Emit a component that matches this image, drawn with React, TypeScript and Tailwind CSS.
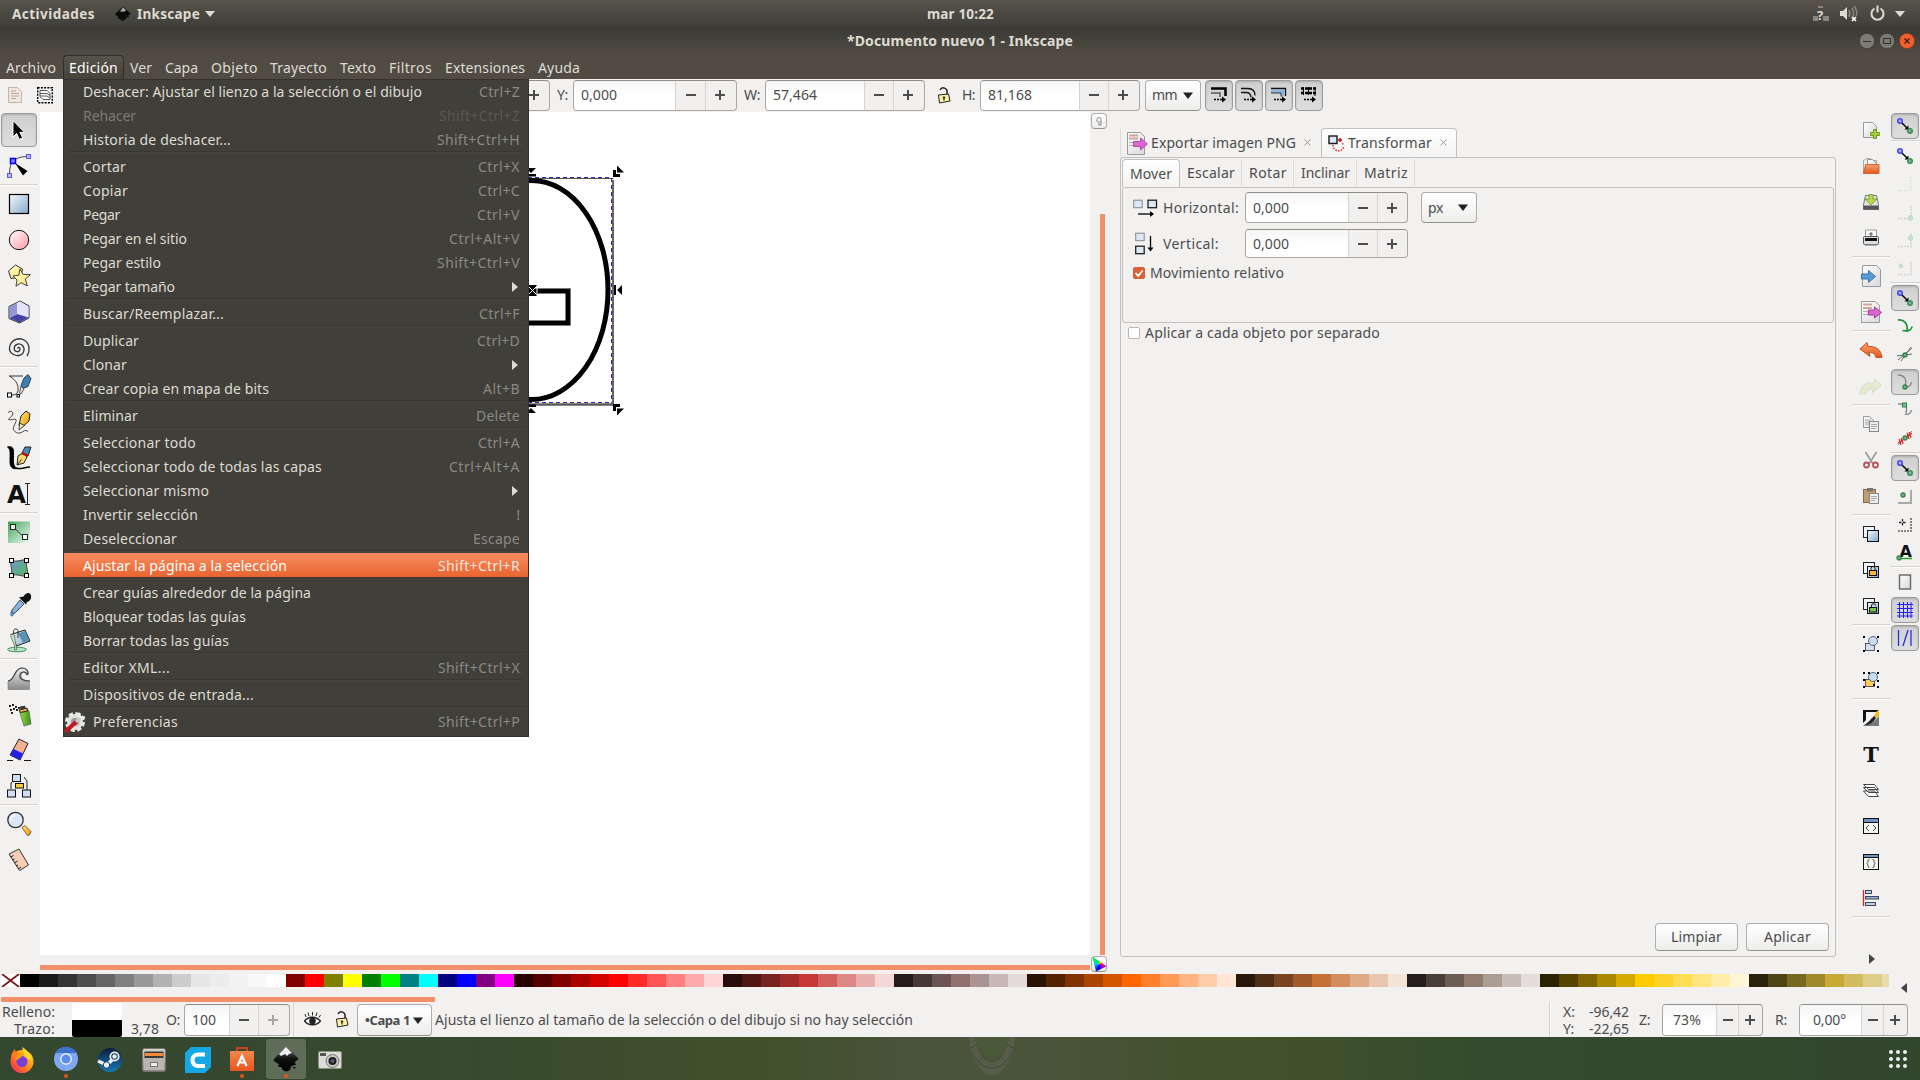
import { useLayoutEffect, useRef, type ReactNode } from "react";

/** Text run spread over a fixed advance width. */
function Fit({ w, children, className = "" }: { w?: number; children: string; className?: string }) {
  const ref = useRef<HTMLSpanElement>(null);
  useLayoutEffect(() => {
    const el = ref.current;
    if (!el || !w) return;
    el.style.letterSpacing = "0px";
    const natural = el.getBoundingClientRect().width;
    el.style.letterSpacing = `${(w - natural) / children.length}px`;
  }, [w, children]);
  return (
    <span ref={ref} className={"inline-block shrink-0 whitespace-pre " + className}>
      {children}
    </span>
  );
}

function Svg({ s = 24, children }: { s?: number; children: ReactNode }) {
  return (
    <svg width={s} height={s} viewBox={`0 0 ${s} ${s}`} fill="none" className="block shrink-0 overflow-visible">
      {children}
    </svg>
  );
}

function Defs() {
  return (
    <svg width="0" height="0" className="absolute">
      <defs>
        <linearGradient id="blue" x1="0" y1="0" x2="1" y2="1"><stop stopColor="#f4f8fc" /><stop offset="1" stopColor="#84a9cd" /></linearGradient>
        <linearGradient id="pink" x1="0" y1="0" x2="1" y2="1"><stop stopColor="#fff" /><stop offset="1" stopColor="#ff98a2" /></linearGradient>
        <linearGradient id="yellow" x1="0" y1="0" x2="1" y2="1"><stop stopColor="#fffce0" /><stop offset="1" stopColor="#ffe65c" /></linearGradient>
        <linearGradient id="green" x1="0" y1="0" x2="1" y2="1"><stop stopColor="#3ea55a" /><stop offset="1" stopColor="#f2fbf4" /></linearGradient>
        <linearGradient id="mesh" x1="0" y1="0" x2="1" y2="1"><stop stopColor="#6f9bd0" /><stop offset="1" stopColor="#58b558" /></linearGradient>
        <linearGradient id="orange" x1="0" y1="0" x2="0" y2="1"><stop stopColor="#f8a36c" /><stop offset="1" stopColor="#e2591f" /></linearGradient>
        <linearGradient id="gold" x1="0" y1="0" x2="1" y2="1"><stop stopColor="#ffe27a" /><stop offset="1" stopColor="#f09a00" /></linearGradient>
        <linearGradient id="paper" x1="0" y1="0" x2="1" y2="1"><stop stopColor="#fff" /><stop offset="1" stopColor="#d8d8d8" /></linearGradient>
        <linearGradient id="wave" x1="0" y1="0" x2="0" y2="1"><stop stopColor="#eee" /><stop offset="1" stopColor="#888" /></linearGradient>
        <linearGradient id="can" x1="0" y1="0" x2="1" y2="0"><stop stopColor="#9ad94a" /><stop offset="1" stopColor="#3f8f16" /></linearGradient>
        <linearGradient id="ink" x1="0" y1="0" x2="0" y2="1"><stop stopColor="#777" /><stop offset=".5" stopColor="#111" /><stop offset="1" stopColor="#000" /></linearGradient>
        <linearGradient id="bag" x1="0" y1="0" x2="0" y2="1"><stop stopColor="#f08a4b" /><stop offset="1" stopColor="#e95420" /></linearGradient>
        <linearGradient id="fox" x1="1" y1="0" x2="0" y2="1"><stop stopColor="#ffe226" /><stop offset=".5" stopColor="#ff8a16" /><stop offset="1" stopColor="#f5156c" /></linearGradient>
        <linearGradient id="steam" x1="0" y1="0" x2="0" y2="1"><stop stopColor="#0a1b3c" /><stop offset="1" stopColor="#1679b5" /></linearGradient>
        <linearGradient id="metal" x1="0" y1="0" x2="0" y2="1"><stop stopColor="#d9d5d0" /><stop offset="1" stopColor="#88847e" /></linearGradient>
      </defs>
    </svg>
  );
}

/* ---------- toolbox ---------- */
const node = (x: number, y: number) => <rect x={x} y={y} width="4" height="4" fill="#fff" stroke="#000" />;
const tools: Record<string, ReactNode> = {
  select: <path d="M6 2.500v16.500l3.600-3.600 2.600 6 3.400-1.700-2.700-5.400h4.600z" fill="#000" stroke="#fff" />,
  node: (<><path d="M2.500 19C2.500 8 8 3 19 2.500" stroke="#444" /><rect x="3.500" y="4.500" width="5" height="5" fill="#8080ff" stroke="#00f" strokeWidth="1.500" /><rect x="19.500" y=".5" width="4" height="4" fill="#b9b9ff" stroke="#5a5af0" /><rect x=".5" y="19.500" width="4" height="4" fill="#b9b9ff" stroke="#5a5af0" /><path d="M8 9l12.500 8-4.500 4.500z" fill="#000" /></>),
  rect: <rect x="2.500" y="2.500" width="19" height="19" fill="url(#blue)" stroke="#000" strokeWidth="1.200" />,
  ellipse: <circle cx="12" cy="12" r="9.700" fill="url(#pink)" stroke="#111" />,
  star: (<><path d="M1.500 7l7-6 7 4-1.500 8-10 1.500z" fill="url(#yellow)" stroke="#333" /><path d="M13 5l3 5.400 7.500.3-5.200 4.300 2 7-6.100-3.300-5.200 3.600 1-6.300-4-4 5.800-.8z" fill="url(#yellow)" stroke="#444" /></>),
  box: (<><path d="M2 6.500L13 1l9 5v12l-9.500 5L2 18.500z" fill="#c9c9ee" stroke="#333" /><path d="M9.500 3L13 1.500l8.500 5v11L9.500 15z" fill="#e3e3fa" /><path d="M2.500 18L10 14l11.500 3.500-9 5z" fill="#4545a5" /><path d="M2.500 7L10 3v11.500L2.500 18z" fill="#9595d8" /></>),
  spiral: <path d="M11.500 12.500c.5-2 3-1 2.500 1.200-.8 3-5.500 2.600-5.800-.9-.3-4.200 4.800-6.500 8-3.500 3.600 3.500 1.500 9.500-3.500 10.200C6.500 20.500 2 15 4 9.500 6 3.500 13 1 18.500 4.200c5.500 3.300 5.700 11 2.500 16" transform="translate(-1 0)" stroke="#333" strokeWidth="1.300" />,
  pen: (<><path d="M2 2h14M2.500 2c8 5 9 10 8.500 15-.5 3-3 4-6 4" stroke="#333" /><rect x=".5" y="19" width="4" height="4" fill="#fff" stroke="#000" /><rect x="10" y="20.500" width="2.500" height="2.500" fill="#fff" stroke="#000" /><path d="M17 4l4-3.500 3 4-3 8-5 2-2-3z" fill="#3d7fb4" stroke="#223" strokeWidth=".8" /><path d="M14 12l3 3-3 5-1.500-1z" fill="#ddd" stroke="#333" strokeWidth=".8" /></>),
  pencil: (<><path d="M1 2.500c3-2.500 6-.5 4.500 2.500C4.500 7 2 8 1.500 9.500c2 1 6.500-1 7.500 0 1.500 2-4.500 8-2 11 3 4 7 2.500 9 1 2-1.600 4-1 5 0" stroke="#444" /><path d="M12 15l2-9 5-5 4 3-1 7-8 7z" fill="url(#gold)" stroke="#222" /><path d="M12 20l.5-7 5 2.500z" fill="#f6e3b6" stroke="#222" strokeWidth=".8" /></>),
  callig: (<><path d="M.5 1c5-1 6 1 6 6 0 8-1 13 3.500 15.500-5 1-7-2-7-7C3 8 4 3 .5 1z" fill="#000" stroke="#000" /><path d="M9 22c5 2 8-1 14-1" stroke="#000" strokeWidth="1.500" /><path d="M10 19l1-9 5-3 4 4-3 6z" fill="#f7d774" stroke="#222" /><path d="M15 7l3-6h6l-3 9z" fill="#4c87c0" stroke="#222" /><path d="M15 7l6 3" stroke="#c00" strokeWidth="2" /><path d="M10.500 18.500l4-5" stroke="#222" /></>),
  text: (<><text x="0" y="21" fontFamily="DejaVu Sans" fontWeight="bold" fontSize="25" textLength="19" lengthAdjust="spacingAndGlyphs" fill="#111">A</text><path d="M18 1.500h5M18 22.500h5M20.500 2v20" stroke="#222" /></>),
  gradient: (<><rect x="1" y="1.500" width="22" height="21.500" fill="url(#green)" /><path d="M6 7l11 10" stroke="#333" /><rect x="3.500" y="4.500" width="5" height="5" stroke="#222" fill="#e6f3e8" /><rect x="15.500" y="14.500" width="5" height="5" stroke="#222" fill="#fff" /></>),
  mesh: (<><path d="M4 4c6 3 10-1 16 0-2 6 2 10 0 16-6 1-10-3-16 0 2-6-1-10 0-16z" fill="url(#mesh)" stroke="#444" />{node(2.5, 2.5)}{node(17.5, 2.5)}{node(2.5, 17.5)}{node(17.5, 17.5)}</>),
  dropper: (<><path d="M13 8l4 4-9 9-3 1-1-1 1-3z" fill="#86b4e0" stroke="#333" strokeWidth=".8" /><path d="M12 5.500l7 7 1-2.500c4-1 5-5 3.500-7.500s-5-1.500-7 2z" fill="#111" /><path d="M5 19c-2 3-1.500 5 0 5s2-2 0-5z" fill="#5f95cf" stroke="#357" strokeWidth=".6" /></>),
  bucket: (<><ellipse cx="10" cy="21.500" rx="9.500" ry="2.300" fill="#b5e8c2" stroke="#274" strokeWidth=".8" /><path d="M4 6.500L18 2l5 11-13.500 5z" fill="url(#blue)" stroke="#222" /><path d="M11 5.500L18 3l4 9.500-6 2.500z" fill="#5a93b5" /><path d="M4 6c-1 4 3 8 3.500 12v4h2c0-6-2-10-2-15z" fill="#b5e8c2" stroke="#444" strokeWidth=".6" /><path d="M7 6C5 1 10-1 11 3v7" stroke="#333" /></>),
  tweak: (<><path d="M1 23.500V15c6 0 6-13 14-13 5 0 7 4 5.500 7-.5-3-3-4-5-2.500-3 3-1 8.500 7 8.500v8.500z" fill="url(#wave)" stroke="#777" strokeWidth=".6" /><path d="M1 15C8 15 7 2 15 2c5 0 7 4 5.500 7M20 9c-1-4-6-4-7 0s3 6 10 6" stroke="#444" strokeWidth="1.200" /></>),
  spray: (<><path d="M13 11c-1-4 6-6 9-2l2 13-7 2z" fill="url(#can)" stroke="#465" strokeWidth=".7" /><path d="M12 8l8-2 .5 3-7 1.500z" fill="#f2b12f" stroke="#222" /><path d="M13 4.500l5-.7.500 3-5 .8z" fill="#333" />{[[2, 3], [5, 2], [8, 4], [3, 7], [6, 6], [9, 7], [4, 10], [11, 5]].map(([x, y]) => <rect key={x + "-" + y} x={x} y={y} width="1.900" height="1.900" fill="#111" />)}</>),
  eraser: (<><path d="M0 22.500h6M17 22.500h7" stroke="#111" strokeWidth="1.200" /><path d="M3 17L12 1l9 4.500L13 22z" fill="#f4b090" stroke="#222" /><path d="M3 17l3.500-6 9.500 4.500L13 22z" fill="#2222e8" /></>),
  connector: (<><path d="M4 15V9l3-3M17 3l3 4v9" stroke="#222" /><rect x="5.500" y=".5" width="8" height="7" fill="#cfe0f4" stroke="#111" /><rect x=".5" y="16" width="8" height="7" fill="#cfe0f4" stroke="#111" /><rect x="15.500" y="16" width="8" height="7" fill="#cfe0f4" stroke="#111" /><rect x="8.500" y="9.500" width="8" height="4.500" fill="#ffcc3a" stroke="#111" /></>),
  zoom: (<><path d="M15 15.500l3-2 6 6-1.500 3.500-2 .5z" fill="url(#gold)" stroke="#543" strokeWidth=".8" /><circle cx="8.500" cy="8" r="7.700" fill="#dbe8f7" stroke="#333" strokeWidth="1.300" /><path d="M3.500 8.500c0-3 2-5 5-5.300" stroke="#fff" strokeWidth="1.500" /></>),
  measure: (<><path d="M2 6L12 1l9.500 16-9 5.500z" fill="#f8cdb6" stroke="#333" /><path d="M3.500 9l3-1.500M5.500 12l2-1M7 15l3.500-2M9 18l2-1M11 21l3-2" stroke="#222" /></>),
};
const toolGroups = [["select", "node"], ["rect", "ellipse", "star", "box", "spiral"], ["pen", "pencil", "callig", "text"], ["gradient", "mesh", "dropper", "bucket"], ["tweak", "spray", "eraser", "connector"], ["zoom", "measure"]];

/* ---------- command bar ---------- */
const page = (x: number, y: number, w: number, h: number) => <path d={`M${x} ${y}h${w - 4}l4 4v${h - 4}h${-w}z`} fill="url(#paper)" stroke="#999" />;
const sheets = (extra: ReactNode) => (<><rect x="4.500" y="4.500" width="11" height="11" fill="#eef4fb" stroke="#222" /><rect x="8.500" y="8.500" width="11" height="11" fill="url(#blue)" stroke="#111" />{extra}</>);
const corners = [[4, 4], [18, 4], [4, 18], [18, 18]].map(([x, y]) => <rect key={`${x}${y}`} x={x} y={y} width="2" height="2" fill="#000" />);
const objects = (fill: string) => (<><rect x="6.500" y="11.500" width="9" height="7" fill={fill} stroke="#334" strokeWidth=".8" /><circle cx="14" cy="9" r="4.500" fill="#c6dcf2" stroke="#445" strokeWidth=".8" /></>);
const commands: Record<string, ReactNode> = {
  new: (<>{page(4.5, 4.5, 13, 15)}<path d="M14.500 11.500h3v3h3v3h-3v3h-3v-3h-3v-3h3z" fill="#a5cf3a" stroke="#5b8a10" strokeWidth=".8" /></>),
  open: (<><path d="M4.500 19.500v-13l3-2h4l1 2h5v5" fill="#eee" stroke="#aaa" />{page(8.5, 5.5, 9, 10)}<path d="M4.500 19.500l2-9h13.500v9z" fill="url(#orange)" stroke="#c9521f" strokeWidth=".8" /></>),
  save: (<><path d="M4.500 14.500l2-9h11l2 9v5h-15z" fill="#e4e4e2" stroke="#777" /><path d="M4.500 15.500h15v4h-15z" fill="#555" /><path d="M10 4.500h4V9h4l-6 6-6-6h4z" fill="#b5d84e" stroke="#6b9a20" strokeWidth=".8" /></>),
  print: (<><path d="M6.500 11v-7h11v7" fill="#fff" stroke="#999" /><path d="M12 6v4M10 8h4" stroke="#555" /><rect x="4.500" y="10.500" width="15" height="8" rx="1" fill="#ddd" stroke="#555" /><path d="M6 12h12v3H6z" fill="#111" /><path d="M6 18.500h12v1.500H6z" fill="#aaa" /></>),
  import: (<>{page(3.5, 1.5, 18, 21)}<path d="M2.500 10h7V6.500l7 6-7 6V15h-7z" fill="#5b9bd5" stroke="#3973ac" /></>),
  export: (<>{page(2.5, 1.5, 18, 21)}<path d="M4 4.500h9M4 8h9" stroke="#d0a49a" strokeWidth="2" /><path d="M4 11.500h6M4 14.500h6" stroke="#aaa" /><path d="M9.500 10h6V7l7 5.500-7 5.500v-3h-6z" fill="#dd66cf" stroke="#a03c98" /></>),
  undo: <path d="M1 11l7-6.500 1 4c8-.5 13 3 14 11h-6c-1-4-3-5-7-5l1 4z" fill="url(#orange)" stroke="#c2501c" />,
  redo: <path d="M22.500 11.500l-7-6.500-1 4C6.500 8.500 1.500 12 1 20h6c1-4 3-5 7-5l-1 4z" fill="#e4ead2" stroke="#d7dfc0" />,
  copy: (<>{page(4.5, 4.5, 10, 11)}<path d="M6 8h6M6 10h4M6 12h4" stroke="#aaa" /><rect x="10.500" y="9.500" width="9" height="10" fill="#eee" stroke="#888" /><path d="M12 12.500h6M12 14.500h6M12 16.500h5" stroke="#aaa" /></>),
  cut: (<><path d="M6.500 4l7.500 12M17.500 4L10 16" stroke="#999" strokeWidth="1.600" /><circle cx="7.500" cy="17" r="2.500" stroke="#b8505a" strokeWidth="1.800" /><circle cx="16.500" cy="17" r="2.500" stroke="#b8505a" strokeWidth="1.800" /></>),
  paste: (<><rect x="4.500" y="5.500" width="12" height="13" fill="#c29d72" stroke="#8a6a44" /><rect x="8" y="4" width="6" height="3.500" fill="#777" /><rect x="10.500" y="9.500" width="9" height="10" fill="#eee" stroke="#888" /><path d="M12 12.500h6M12 14.500h6M12 16.500h4" stroke="#aaa" /></>),
  dup: sheets(null),
  clone: sheets(<><rect x="10.500" y="12.500" width="7" height="5" fill="#ffb629" stroke="#111" /><path d="M12 12v-1.500a2 2 0 014 0V12" stroke="#111" /></>),
  unlink: sheets(<><rect x="10.500" y="13.500" width="7" height="4.500" fill="#7cc242" stroke="#111" /><path d="M12.500 13v-1a2 2 0 014-.5" stroke="#111" /></>),
  group: <>{objects("#cfe0f4")}{corners}</>,
  ungroup: (<>{objects("#ffcc55")}{corners}<path d="M9 4h2v2H9zM18 12h2v2h-2zM4 11h2v2H4zM14 16h2v2h-2z" fill="#000" /></>),
  fill: (<><path d="M4.500 4.500h15L4.500 19.500z" fill="#f4f4f4" /><path d="M4 4h16v2H7v8l-3 3z" fill="#111" /><path d="M20 10v10H6c6-2 10-5 14-10z" fill="#777" /><path d="M20 4v7l-3 1-2-2 3-5z" fill="#f5b62c" /><path d="M15 10l2 2c-2 4-6 7-13 8 5-3 7-6 11-10z" fill="#222" /></>),
  font: <text x="12" y="20" textAnchor="middle" fontFamily="DejaVu Serif" fontWeight="bold" fontSize="21" fill="#111">T</text>,
  layers: <path d="M4.500 13h11l4 5.500h-10zM4.500 9.500h11l4 5h-10zM4.500 6.500h11l4 5h-10z" fill="#fff" stroke="#444" />,
  xml: (<><rect x="4.500" y="4.500" width="15" height="15" fill="#f4f4ee" stroke="#111" /><path d="M5 5h14v3H5z" fill="#6c93c4" /><path d="M5 8.500h14" stroke="#111" /><path d="M10 11l-3 3 3 3M14 11l3 3-3 3" stroke="#444" /></>),
  css: (<><rect x="4.500" y="4.500" width="15" height="15" fill="#f4f4ee" stroke="#111" /><path d="M5 5h14v2H5z" fill="#6c93c4" /><path d="M5 7.500h14" stroke="#111" /><path d="M10.500 9.500c-2.500 0-1 3.500-2.500 4 1.500.5 0 4 2.500 4M13.500 9.500c2.500 0 1 3.500 2.500 4-1.500.5 0 4-2.500 4" stroke="#444" /></>),
  align: (<><path d="M4.500 4v16" stroke="#d22" strokeWidth="1.300" /><rect x="6.500" y="4.500" width="6" height="3" fill="#bcd3ec" stroke="#445" /><rect x="6.500" y="10.500" width="13" height="2.500" fill="#8fb2d8" stroke="#445" /><rect x="6.500" y="16.500" width="10" height="3" fill="#bcd3ec" stroke="#445" /></>),
};
const commandGroups = [["new", "open", "save", "print"], ["import", "export"], ["undo", "redo"], ["copy", "cut", "paste"], ["dup", "clone", "unlink"], ["group", "ungroup"], ["fill", "font", "layers", "xml", "css", "align"]];

/* ---------- snap bar ---------- */
const gdot = (x: number, y: number) => <circle cx={x} cy={y} r="2" fill="#7fa0b8" stroke="#2c8a35" strokeWidth="1.300" />;
const snapMain = (<><circle cx="3" cy="3" r="2.200" fill="#aab4ff" stroke="#4545f0" strokeWidth="1.600" /><path d="M5 5l5.500 5.500" stroke="#000" strokeWidth="1.400" /><path d="M11.500 7.500v4h-4z" fill="#000" /><circle cx="13" cy="13" r="2.200" fill="#8ab" stroke="#3a9345" strokeWidth="1.600" /></>);
const dashCorner = <path d="M1 14.500h13V1" stroke="#d2d2d2" strokeWidth="1.600" strokeDasharray="2 1" />;
const snaps: Record<string, ReactNode> = {
  main: snapMain,
  bbox: <path d="M1 14.500h12.500V1" stroke="#d5e8d5" strokeWidth="1.600" strokeDasharray="2 1" />,
  bcorner: <>{dashCorner}<circle cx="13.500" cy="14" r="2" fill="#cdd8e0" stroke="#c3ddc5" strokeWidth="1.300" /></>,
  bmid: <>{dashCorner}<circle cx="13.500" cy="6" r="2" fill="#cdd8e0" stroke="#c3ddc5" strokeWidth="1.300" /></>,
  bcenter: <>{dashCorner}<circle cx="4" cy="6" r="1.800" fill="#d5dddd" stroke="#c3ddc5" strokeWidth="1.300" /></>,
  path: <path d="M1 2c6-1 10 4 9 10M5.500 12.500c5 1 9 0 9.500-4" stroke="#189030" strokeWidth="1.600" />,
  inter: <><path d="M1 14L15 2M4 15L14 1M0 10l15-2" stroke="#666" />{gdot(8, 9)}</>,
  cusp: <><path d="M1 1c7 0 9 5 7 11M7 13c5 1 7-2 7.500-5" stroke="#888" strokeWidth="1.400" />{gdot(8, 13)}</>,
  smooth: <><path d="M1 2h5c4 0 4 5 3 9M8 12c4 1 6-1 6.500-4" stroke="#888" strokeWidth="1.400" /><rect x="5.500" y="1" width="4" height="4" fill="#8ab" stroke="#2c8a35" /></>,
  line: <><path d="M1 15L15 1" stroke="#888" /><path d="M2 9l2 6M4 8l2 6M1 13l5-3M10 3l2 6M12 2l2 6M10 7l5-4" stroke="#d22" strokeWidth="1.200" />{gdot(8, 8)}</>,
  center: <><path d="M1 15h13V2" stroke="#aaa" strokeWidth="2" />{gdot(6, 7)}</>,
  rot: <><path d="M1 15h13V2" stroke="#666" strokeWidth="1.600" strokeDasharray="2 1" /><path d="M5.500 3v7M2 6.500h7" stroke="#222" strokeWidth="1.300" strokeDasharray="2.500 1.500" /></>,
  textb: <><path d="M1 14.500h14" stroke="#2ca02c" strokeWidth="1.500" /><text x="2.500" y="13" fontFamily="DejaVu Sans" fontWeight="bold" fontSize="16" fill="#111">A</text>{gdot(2, 14)}</>,
  pageb: <rect x="2.500" y="1" width="11" height="14" fill="url(#paper)" stroke="#666" strokeWidth="1.400" />,
  grid: <path d="M2.500 0v16M6.500 0v16M10.500 0v16M14 0v16M0 2.500h16M0 6.500h16M0 10.500h16M0 14h16" stroke="#2020f0" />,
  guide: <path d="M1.500 0v16M14 0v16M6 16L11 0" stroke="#2020f0" strokeWidth="1.200" />,
};
const snapGroups = [["*main"], ["main", "bbox", "bcorner", "bmid", "bcenter"], ["*main", "path", "inter", "*cusp", "smooth", "line"], ["*main", "center", "rot", "textb"], ["pageb", "*grid", "*guide"]];

const PRESSED = "rounded-[4px] border border-[#9d9b99] bg-gradient-to-b from-[#cfcfcf] to-[#dedede] shadow-[inset_0_1px_2px_rgba(0,0,0,.18)]";
const RAISED = "rounded-[4px] border border-[#b0aeac] border-b-[#98928a] bg-gradient-to-b from-white to-[#ededec]";

/* ---------- menu ---------- */
type Item = [label: string, w: number, keys?: string, kw?: number];
const menu: Item[][] = [
  [["Deshacer: Ajustar el lienzo a la selección o el dibujo", 339, "Ctrl+Z", 41], ["Rehacer", 53, "Shift+Ctrl+Z", 81], ["Historia de deshacer...", 148, "Shift+Ctrl+H", 83]],
  [["Cortar", 43, "Ctrl+X", 42], ["Copiar", 45, "Ctrl+C", 42], ["Pegar", 37, "Ctrl+V", 43], ["Pegar en el sitio", 104, "Ctrl+Alt+V", 71], ["Pegar estilo", 78, "Shift+Ctrl+V", 83], ["Pegar tamaño", 92, ">"]],
  [["Buscar/Reemplazar...", 141, "Ctrl+F", 41]],
  [["Duplicar", 56, "Ctrl+D", 43], ["Clonar", 44, ">"], ["Crear copia en mapa de bits", 186, "Alt+B", 37]],
  [["Eliminar", 55, "Delete", 44]],
  [["Seleccionar todo", 113, "Ctrl+A", 42], ["Seleccionar todo de todas las capas", 239, "Ctrl+Alt+A", 71], ["Seleccionar mismo", 126, ">"], ["Invertir selección", 115, "!"], ["Deseleccionar", 94, "Escape", 47]],
  [["Ajustar la página a la selección", 204, "Shift+Ctrl+R", 82]],
  [["Crear guías alrededor de la página", 228], ["Bloquear todas las guías", 163], ["Borrar todas las guías", 146]],
  [["Editor XML...", 87, "Shift+Ctrl+X", 82]],
  [["Dispositivos de entrada...", 171]],
  [["Preferencias", 85, "Shift+Ctrl+P", 82]],
];

function EditMenu() {
  return (
    <div className="absolute left-[63px] top-[79px] z-20 flex h-[658px] w-[466px] flex-col border-x border-b border-[#33322e] bg-[#403f3a] text-[#dfdbd2] shadow-[inset_0_1px_0_#33322e]">
      {menu.map((group, gi) => (
        <div key={gi} className="flex flex-col">
          {gi > 0 && <div className="mx-1 h-[3px] border-t border-[#383733] bg-[#46453f]/50" />}
          {group.map(([label, w, keys, kw]) => {
            const hot = label.startsWith("Ajustar");
            const off = label === "Rehacer";
            const prefs = label === "Preferencias";
            return (
              <div
                key={label}
                className={
                  "flex items-center justify-between pr-[8px] " +
                  (prefs ? "h-[26px] " : "h-6 pl-[19px] pt-[2px] ") +
                  (hot ? "bg-gradient-to-b from-[#f88c5e] to-[#e8642f] text-white" : off ? "text-[#7e7b75]" : "")
                }
              >
                <span className="flex items-center">
                  {prefs && (
                    <span className="mr-[7px]">
                      <Svg s={22}>
                        <circle cx="11" cy="11" r="8" fill="#ddd" stroke="#e8e8e8" strokeWidth="4" strokeDasharray="4 2.300" />
                        <circle cx="11" cy="11" r="4" fill="#999" />
                        <path d="M2.500 19.500l9-8" stroke="#c4161c" strokeWidth="4" strokeLinecap="round" />
                        <path d="M12 11l5-5" stroke="#ccc" strokeWidth="3" />
                        <path d="M16 2c-2 3 1 6 5 4" stroke="#eee" strokeWidth="2.500" />
                      </Svg>
                    </span>
                  )}
                  <Fit w={w}>{label}</Fit>
                </span>
                {keys === ">" ? (
                  <span className="mr-[2px]"><svg width="6" height="10" className="block"><path d="M0 0l6 5-6 5z" fill="#dfdbd2" /></svg></span>
                ) : keys ? (
                  <Fit w={kw} className={hot ? "text-[#f8e6de]" : off ? "text-[#5a5852]" : "text-[#8c8983]"}>{keys}</Fit>
                ) : null}
              </div>
            );
          })}
        </div>
      ))}
    </div>
  );
}

/* ---------- form controls ---------- */
function Spin({ box, field, btn, value, vw, dim }: { box: string; field: string; btn: string; value: string; vw: number; dim?: boolean }) {
  return (
    <div className={"flex shrink-0 overflow-hidden rounded-[4px] border border-[#a9a7a4] border-t-[#8f8d8a] bg-[#f1f0ef] " + box}>
      <div className={"flex items-center bg-gradient-to-b from-[#f4f4f4] via-white to-white " + field}><Fit w={vw}>{value}</Fit></div>
      <div className={"flex items-center justify-center border-l border-[#d6d4d2] " + btn}>
        <span className="h-[2px] w-[10px] bg-[#4c4c4c]" />
      </div>
      <div className="flex flex-1 items-center justify-center border-l border-[#d6d4d2] pr-[2px]">
        <svg width="10" height="10"><path d="M5 0v10M0 5h10" stroke={dim ? "#a9a6a2" : "#4c4c4c"} strokeWidth="2" /></svg>
      </div>
    </div>
  );
}
const Down = () => <svg width="10" height="7" className="block shrink-0"><path d="M0 .5h10L5 7z" fill="#222" /></svg>;
const Lock = () => (
  <svg width="14" height="17" viewBox="0 0 14 17" fill="none"><path d="M3 3C5-1 11 1 10 6v2" stroke="#222" strokeWidth="1.500" /><path d="M1.500 8l10-1 1.500 7-10.500 2z" fill="#fff3a0" stroke="#222" /><path d="M7 9.500v4M5.800 10.500h2.400" stroke="#222" strokeWidth="1.300" /></svg>
);

const menubar: [string, number, string][] = [["Ver", 22, "w-[35px]"], ["Capa", 33, "w-[46px]"], ["Objeto", 47, "w-[59px]"], ["Trayecto", 57, "w-[70px]"], ["Texto", 36, "w-[49px]"], ["Filtros", 43, "w-[56px]"], ["Extensiones", 80, "w-[93px]"], ["Ayuda", 42, "w-[42px]"]];

function Header() {
  return (
    <>
      <div className="flex h-[27px] items-center bg-gradient-to-b from-[#58544b] to-[#3f3e39] px-3 font-bold text-[#dfdbd2]">
        <div className="flex w-[936px] items-center">
          <Fit w={83} className="text-[13.500px]">Actividades</Fit>
          <span className="ml-[20px] mr-[6px]">
            <svg width="16" height="16" viewBox="0 0 24 24"><path d="M12 1l11 10c1 2-4 3-3 4s2 2-1 2-2 3-5 4-2 2-4 1-1-3-4-3 0-2-3-4-3-2-2-4z" fill="#0c0c0c" /><path d="M12 2l5 5-3 1-2 1-2-1-3 1z" fill="#aaa" /></svg>
          </span>
          <Fit w={63} className="text-[13.500px]">Inkscape</Fit>
          <svg width="10" height="6" className="ml-[5px]"><path d="M0 0h10L5 6z" fill="#dfdbd2" /></svg>
        </div>
        <div className="flex flex-1 justify-start"><div className="-ml-[21px]"><Fit w={67} className="text-[13.500px]">mar 10:22</Fit></div></div>
        <div className="flex items-center">
          <Svg s={17}><path d="M6 1h5v2H6zM1 11h5v5H1zM11 11h6v5h-6z" fill="#8b8780" /><text x="5" y="15" fontFamily="Noto Sans" fontWeight="bold" fontSize="13" fill="#dfdbd2">?</text></Svg>
          <span className="ml-[11px]"><Svg s={17}><path d="M0 6h3l4-4v13l-4-4H0z" fill="#dfdbd2" /><path d="M9 5c1 2 1 5 0 7M12 3c2 3 2 8 0 11M14 1c3 4 3 8 2 10" stroke="#8b8780" strokeWidth="1.500" /><path d="M12 12l4 4M16 12l-4 4" stroke="#fff" strokeWidth="1.700" /></Svg></span>
          <span className="ml-[13px]"><Svg s={15}><path d="M4.500 2.500a6 6 0 106 0M7.500-.5v7" stroke="#dfdbd2" strokeWidth="2" /></Svg></span>
          <svg width="10" height="6" className="ml-[10px] mr-[3px]"><path d="M0 0h10L5 6z" fill="#dfdbd2" /></svg>
        </div>
      </div>
      <div className="flex h-[27px] items-center bg-gradient-to-b from-[#3a3935] to-[#504c44] pr-[5px] text-[#dfdbd2]">
        <div className="flex flex-1 pl-[847px]"><Fit w={226} className="text-[14px] font-bold">*Documento nuevo 1 - Inkscape</Fit></div>
        <div className="flex items-center gap-[4px]">
          <Svg s={16}><circle cx="8" cy="8" r="7.700" fill="#7d7a73" stroke="#33322e" strokeWidth=".7" /><path d="M4 8.500h8" stroke="#33322e" /></Svg>
          <Svg s={16}><circle cx="8" cy="8" r="7.700" fill="#7d7a73" stroke="#33322e" strokeWidth=".7" /><rect x="4.500" y="5.500" width="7" height="5" stroke="#33322e" /></Svg>
          <Svg s={16}><circle cx="8" cy="8" r="7.700" fill="#ee5f2d" stroke="#7b2d12" strokeWidth=".7" /><path d="M5.500 5.500l5 5M10.500 5.500l-5 5" stroke="#4a1c0c" strokeWidth="1.400" /></Svg>
        </div>
      </div>
      <div className="flex h-[25px] items-center bg-[#504c44] pl-[6px] text-[#dfdbd2]">
        <span className="w-[57px] pt-[2px]"><Fit w={50}>Archivo</Fit></span>
        <span className="mr-[6px] mt-[1px] flex h-6 w-[61px] items-center rounded-t-[4px] border border-b-0 border-[#2f2e2a] bg-gradient-to-b from-[#57534a] to-[#454339] pl-[5px] pt-[1px] text-white"><Fit w={49}>Edición</Fit></span>
        {menubar.map(([t, w, cls]) => <span key={t} className={"pt-[2px] " + cls}><Fit w={w}>{t}</Fit></span>)}
      </div>
    </>
  );
}

const arrow = <><path d="M3 12.500h9" stroke="#000" strokeWidth="1.500" strokeDasharray="2 1" /><path d="M11 9.500l4 3-4 3z" fill="#000" /></>;
const affect: ReactNode[] = [
  <><path d="M0 1.500h14.500V9" stroke="#000" strokeWidth="2.500" /><path d="M0 6h9v4" stroke="#555" strokeWidth="1.500" />{arrow}</>,
  <><path d="M0 1.500h7c5 0 7 3 7 7" stroke="#111" strokeWidth="1.300" /><path d="M0 5.500h5c4 0 5 2 5 5" stroke="#111" strokeWidth="1.300" />{arrow}</>,
  <><path d="M0 1.500h14.500V9" stroke="#111" strokeWidth="1.300" /><path d="M0 2.500h13.500v7h-3.500V6H0z" fill="#8fb4dc" /><path d="M0 6h10v3.500" stroke="#333" />{arrow}</>,
  <><path d="M0 1.500h16M0 6h16" stroke="#000" strokeWidth="2.500" strokeDasharray="3 1" /><path d="M2.500 0v8M7.500 0v8M14 0v9" stroke="#000" />{arrow}</>,
];

function ControlBar() {
  return (
    <div className="flex h-[33px] items-center border-b border-[#f2f1f0] bg-[#f2f1f0] pl-[6px]">
      <Svg s={18}><path d="M2.500 1.500h9l4 4v11h-13z" fill="#eee6e0" stroke="#c0b4ac" /><path d="M5 5h5M5 7.500h8M5 10h8M5 12.500h5" stroke="#c9a79a" strokeWidth="1.200" /></Svg>
      <span className="ml-[13px] w-[412px]"><Svg s={16}><rect x=".7" y=".7" width="14.600" height="15" stroke="#000" strokeWidth="1.400" strokeDasharray="2 1.200" /><path d="M3 3.500h7l3 3v6H6l-3-3zM3 6.500h7l3 2M3 9h7l3 2" fill="#fff" stroke="#444" strokeWidth=".9" /></Svg></span>
      <Spin box="h-[31px] w-[101px]" field="w-[42px]" btn="w-[28px]" value=" " vw={4} />
      <Fit w={11} className="ml-[7px] mr-[5px]">Y:</Fit>
      <Spin box="h-[31px] w-[164px]" field="w-[101px] pl-[7px]" btn="w-[30px]" value="0,000" vw={36} />
      <Fit w={16} className="ml-[7px] mr-[5px]">W:</Fit>
      <Spin box="h-[31px] w-[160px]" field="w-[98px] pl-[7px]" btn="w-[29px]" value="57,464" vw={44} />
      <span className="ml-[12px] mr-[11px]"><Lock /></span>
      <Fit w={13} className="mr-[5px]">H:</Fit>
      <Spin box="h-[31px] w-[160px]" field="w-[98px] pl-[7px]" btn="w-[29px]" value="81,168" vw={44} />
      <div className={"ml-[5px] flex h-[31px] w-[56px] items-center justify-between pl-[6px] pr-[7px] " + RAISED}><Fit w={25}>mm</Fit><Down /></div>
      <div className="ml-[4px] flex gap-[2px]">
        {affect.map((a, i) => <div key={i} className={"flex h-[31px] w-[28px] items-start justify-center pt-[6px] " + PRESSED}><Svg s={16}>{a}</Svg></div>)}
      </div>
    </div>
  );
}

function Drawing() {
  return (
    <svg width="1050" height="843" viewBox="40 112 1050 843" fill="none" className="block">
      <path d="M500 178.500h113.500" stroke="#555" />
      <path d="M613 180v226" stroke="#666" strokeWidth="2" />
      <path d="M500 404.500h114" stroke="#5c5c5c" strokeWidth="2.500" />
      <path d="M500 177.500h112M611.500 178v225M500 402.500h112" stroke="#2a2ab0" strokeDasharray="4 3" />
      <ellipse cx="531.500" cy="290" rx="76.500" ry="109.500" stroke="#000" strokeWidth="5" />
      <rect x="490" y="291" width="78" height="32" stroke="#000" strokeWidth="5" />
      <path d="M500 289v-.5h70.500V325.500H500" stroke="#777" strokeWidth=".7" />
      <g fill="#000">
        <path d="M526 168h10l-5 5zM526 174h10v2.500h-10z" />
        <path d="M526 407h10v-2.500h-10zM526 413h10l-5-5z" />
        <path d="M617 165.500l7 7h-7zM613 170h3v4h4v3h-7z" />
        <path d="M617 415.500l7-7h-7zM613 411h3v-4h4v-3h-7z" />
        <path d="M622 285v10l-5-5zM614 285h2v10h-2z" />
      </g>
      <path d="M526 285h11l-4 5.500 4 5.500h-11z" fill="#000" />
      <path d="M529 287l7 7M536 287l-7 7M537 288v5" stroke="#fff" />
    </svg>
  );
}

const Rule = ({ cls }: { cls: string }) => <div className={"h-[2px] border-t border-[#d4d2d0] bg-[#fafafa] " + cls} />;

function IconColumn({ groups, icons, tools: isTools }: { groups: string[][]; icons: Record<string, ReactNode>; tools?: boolean }) {
  return (
    <>
      {groups.map((g, gi) => (
        <div key={gi}>
          {(gi > 0) && <Rule cls="w-[38px]" />}
          {g.map((k) => (
            <div key={k} className="flex h-9 w-[38px] items-center justify-center">
              {k === "select" ? (
                <div className={"flex h-[34px] w-[36px] items-center justify-center " + PRESSED}><Svg>{icons[k]}</Svg></div>
              ) : <Svg>{icons[k]}</Svg>}
            </div>
          ))}
        </div>
      ))}
      {!isTools && <Rule cls="w-[38px]" />}
    </>
  );
}

const innerTabs: [string, number, string][] = [["Escalar", 48, "w-[62px]"], ["Rotar", 38, "w-[52px]"], ["Inclinar", 49, "w-[63px]"], ["Matriz", 44, "w-[58px]"]];

function Dock() {
  return (
    <div className="flex h-[845px] w-[716px] flex-col pt-[16px]">
      <div className="flex h-[29px] items-end">
        <div className="flex h-[29px] w-[201px] items-center border-l border-[#dedcda] pl-[6px]">
          <Svg s={24}><g transform="translate(-1 1)"><path d="M1.500.5h13l4 4v18h-17z" fill="url(#paper)" stroke="#999" /><path d="M3 3.500h9M3 6.500h9" stroke="#d0a49a" strokeWidth="2" /><path d="M3 10.500h5M3 13.500h5" stroke="#aaa" /><path d="M7.500 9.500h7V6l7 6-7 6v-3.500h-7z" fill="#dd66cf" stroke="#a03c98" strokeWidth=".8" /></g></Svg>
          <Fit w={145}>Exportar imagen PNG</Fit>
          <svg width="7" height="7" className="ml-[8px]"><path d="M.5.500l6 6M6.500.500l-6 6" stroke="#999" /></svg>
        </div>
        <div className="flex h-[29px] w-[136px] items-center rounded-t-[4px] border border-b-0 border-[#c3c1bf] bg-gradient-to-b from-white to-[#f4f3f2] pl-[6px]">
          <Svg s={17}><rect x="1" y="1" width="8" height="7.500" fill="#dce8f5" stroke="#222" strokeWidth="1.500" /><path d="M10 5h4M12 3v4" stroke="#c11" strokeWidth="1.500" /><path d="M5 10c0 7 10 8 11 1M15 9.500L13.500 7" stroke="#d22" strokeWidth="1.400" strokeDasharray="1.500 1.300" /></Svg>
          <Fit w={84} className="ml-[3px]">Transformar</Fit>
          <svg width="7" height="7" className="-mt-[2px] ml-[8px]"><path d="M.5.500l6 6M6.500.500l-6 6" stroke="#999" /></svg>
        </div>
      </div>
      <div className="flex flex-1 flex-col rounded-[3px] border border-[#c3c1bf] px-px pt-px">
        <div className="flex h-[28px]">
          <div className="flex h-[28px] w-[58px] items-center rounded-t-[4px] border border-b-0 border-[#c3c1bf] bg-gradient-to-b from-white to-[#f4f3f2] pl-[7px]"><Fit w={42}>Mover</Fit></div>
          {innerTabs.map(([t, w, cls]) => <div key={t} className={"flex h-[27px] items-center border-r border-[#dedcda] pl-[7px] " + cls}><Fit w={w}>{t}</Fit></div>)}
        </div>
        <div className="flex h-[136px] flex-col rounded-[3px] border border-[#c3c1bf] pl-[10px]">
          <div className="mt-[4px] flex h-[31px] items-center">
            <span className="mr-[5px]"><svg width="25" height="18" fill="none"><rect x=".7" y="1.200" width="8.500" height="7.500" fill="#dce8f5" stroke="#888" /><rect x="15" y="1.200" width="8.500" height="7.500" fill="#dce8f5" stroke="#222" strokeWidth="1.300" /><path d="M5 15h13" stroke="#000" strokeWidth="1.300" /><path d="M17 12l4 3-4 3z" fill="#000" /></svg></span>
            <span className="w-[82px]"><Fit w={76}>Horizontal:</Fit></span>
            <Spin box="h-[31px] w-[163px]" field="w-[102px] pl-[7px]" btn="w-[29px]" value="0,000" vw={36} />
            <div className={"ml-[13px] flex h-[31px] w-[56px] items-center justify-between pl-[6px] pr-[8px] " + RAISED}><Fit w={15}>px</Fit><Down /></div>
          </div>
          <div className="mt-[6px] flex h-[29px] items-center">
            <span className="mr-[5px] pl-[2px]"><svg width="23" height="24" fill="none"><rect x=".7" y="1.200" width="8.500" height="7.500" fill="#dce8f5" stroke="#888" /><rect x=".7" y="14.200" width="8.500" height="7.500" fill="#dce8f5" stroke="#222" strokeWidth="1.300" /><path d="M15.500 4v12" stroke="#000" strokeWidth="1.300" /><path d="M12.500 15.500h6l-3 4z" fill="#000" /></svg></span>
            <span className="w-[82px]"><Fit w={56}>Vertical:</Fit></span>
            <Spin box="h-[29px] w-[163px]" field="w-[102px] pl-[7px]" btn="w-[29px]" value="0,000" vw={36} />
          </div>
          <div className="mt-[5px] flex h-[20px] items-center">
            <svg width="12" height="12"><rect width="12" height="12" rx="2" fill="#dc5f35" /><path d="M2.500 6l2.700 2.800 4.500-5.300" stroke="#fff" strokeWidth="1.800" fill="none" /></svg>
            <Fit w={134} className="ml-[5px]">Movimiento relativo</Fit>
          </div>
        </div>
        <div className="flex h-[20px] items-center pl-[6px]">
          <div className="size-[12px] rounded-[2px] border border-[#b9b7b5] bg-white" />
          <Fit w={235} className="ml-[5px]">Aplicar a cada objeto por separado</Fit>
        </div>
        <div className="mt-auto flex justify-end gap-[8px] pb-[5px] pr-[5px]">
          <div className={"flex h-[28px] w-[83px] items-center justify-center " + RAISED}><Fit w={51}>Limpiar</Fit></div>
          <div className={"flex h-[28px] w-[83px] items-center justify-center " + RAISED}><Fit w={47}>Aplicar</Fit></div>
        </div>
      </div>
    </div>
  );
}

const swatches = (
  "000000 1a1a1a 333333 4d4d4d 666666 808080 999999 b3b3b3 cccccc e6e6e6 ececec f2f2f2 f9f9f9 ffffff 800000 ff0000 808000 ffff00 008000 00ff00 008080 00ffff 000080 0000ff 800080 ff00ff " +
  "2b0000 550000 800000 aa0000 d40000 ff0000 ff2a2a ff5555 ff8080 ffaaaa ffd5d5 280b0b 501616 782121 a02c2c c83737 d35f5f de8787 e9afaf f4d7d7 241c1c 483737 6c5353 916f6f ac9393 c8b7b7 e3dbdb " +
  "2b1100 552200 803300 aa4400 d45500 ff6600 ff7f2a ff9955 ffb380 ffccaa ffe6d5 28170b 502d16 784421 a05a2c c87137 d38d5f deaa87 e9c6af f4e3d7 241f1c 483e37 6c5d53 917c6f ac9d93 c8beb7 e3dedb " +
  "2b2200 554400 806600 aa8800 d4aa00 ffcc00 ffd42a ffdd55 ffe680 ffeeaa fff6d5 28220b 504416 786721 a0892c c8ab37 d3bc5f decd87 e9ddaf"
).split(" ");

function Palette() {
  return (
    <div className="flex h-[28px] items-start pl-px">
      <div className="flex w-[1888px] flex-col">
        <div className="flex h-[13px] overflow-hidden">
          <svg width="19" height="13" className="shrink-0 bg-white"><path d="M1 0l17 13M18 0L1 13" stroke="#7a1010" strokeWidth="1.700" /></svg>
          {swatches.map((c, i) => <div key={i} className="h-[13px] w-[19px] shrink-0" style={{ backgroundColor: "#" + c }} />)}
        </div>
        <div className="mt-[10px] h-[5px] w-[434px] rounded-[1px] bg-[#f2906a]" />
      </div>
      <svg width="6" height="10" className="ml-[12px] mt-[9px]"><path d="M6 0v10L0 5z" fill="#444" /></svg>
    </div>
  );
}

function StatusBar() {
  return (
    <div className="flex h-[35px] items-center">
      <div className="flex w-[72px] flex-col items-end pr-[17px]">
        <Fit w={53} className="h-[17px] leading-[17px]">Relleno:</Fit>
        <Fit w={41} className="h-[17px] leading-[17px]">Trazo:</Fit>
      </div>
      <div className="flex h-[35px] w-[50px] flex-col pt-px"><div className="h-[17px] rounded-t-[2px] bg-white" /><div className="h-[17px] rounded-b-[2px] bg-black" /></div>
      <Fit w={28} className="ml-[9px] mt-[18px] leading-[17px]">3,78</Fit>
      <Fit w={14} className="ml-[7px] mr-[4px]">O:</Fit>
      <Spin box="h-[32px] mt-px w-[106px]" field="w-[44px] pl-[7px]" btn="w-[29px]" value="100" vw={24} dim />
      <div className="ml-[3px] h-full w-px bg-[#dad8d6]" />
      <svg width="17" height="16" viewBox="0 0 17 16" fill="none" className="ml-[10px]"><path d="M.5 9c4-5 11-5 16 0-4 5-12 5-16 0z" fill="#fff" stroke="#222" strokeWidth="1.300" /><circle cx="8.500" cy="9" r="3.300" fill="#222" /><path d="M2 5L1 2M5 4L4 .5M8.500 3.500V0M12 4l1-3.500M15 5.500L16.500 3" stroke="#222" /></svg>
      <span className="ml-[14px] mr-[8px]"><Lock /></span>
      <div className={"mt-px flex h-[32px] w-[75px] items-center justify-between pl-[7px] pr-[8px] " + RAISED}><Fit w={45} className="text-[13px] font-bold">•Capa 1</Fit><Down /></div>
      <span className="ml-[3px] w-[1114px]"><Fit w={478}>Ajusta el lienzo al tamaño de la selección o del dibujo si no hay selección</Fit></span>
      <div className="h-full w-[2px] border-l border-[#d0cecc] bg-white" />
      <div className="ml-[12px] flex flex-col">
        <div className="flex h-[17px] leading-[17px]"><span className="w-[26px]"><Fit w={12}>X:</Fit></span><Fit w={40}>-96,42</Fit></div>
        <div className="flex h-[17px] leading-[17px]"><span className="w-[26px]"><Fit w={11}>Y:</Fit></span><Fit w={40}>-22,65</Fit></div>
      </div>
      <Fit w={11} className="ml-[10px] mr-[12px]">Z:</Fit>
      <Spin box="h-[32px] mt-px w-[101px]" field="w-[53px] pl-[10px]" btn="w-[22px]" value="73%" vw={28} />
      <Fit w={12} className="ml-[12px] mr-[12px]">R:</Fit>
      <Spin box="h-[32px] mt-px w-[109px]" field="w-[61px] pl-[13px]" btn="w-[22px]" value="0,00°" vw={33} />
    </div>
  );
}

const apps: ReactNode[] = [
  <Svg s={26}><circle cx="13" cy="14.500" r="11.500" fill="url(#fox)" /><path d="M2 10C3 5 5 3 6 2c0 3 2 4 4 5z" fill="#ff7a1a" /><path d="M13 0c4 2 9 7 10 13l-8-2c1-4-1-7-2-11z" fill="#ffd52e" /><circle cx="13" cy="14.500" r="5.500" fill="#7a3fd6" /><path d="M6 11c3-3 6-2 8-1-3 0-4 2-6 3z" fill="#ff9a1f" /></Svg>,
  <Svg s={26}><circle cx="13" cy="13" r="12" fill="#7fa8f0" /><path d="M13 13L2.500 7A12 12 0 0110 24.500z" fill="#4e7fdc" /><path d="M2.500 7a12 12 0 0121 0H13z" fill="#3e70d0" /><circle cx="13" cy="13" r="5.800" fill="#fff" /><circle cx="13" cy="13" r="4.600" fill="#5b8def" /></Svg>,
  <Svg s={26}><circle cx="13" cy="13" r="12" fill="url(#steam)" /><circle cx="17.500" cy="9.500" r="4.200" stroke="#eee" strokeWidth="1.800" /><circle cx="17.500" cy="9.500" r="2.200" fill="#eee" /><path d="M1 14l9 4 5-5" stroke="#eee" strokeWidth="3.500" /><circle cx="9.500" cy="18" r="3.200" fill="#eee" stroke="#13457a" /></Svg>,
  <Svg s={26}><rect x="1.500" y="1.500" width="23" height="23" rx="2" fill="url(#metal)" stroke="#77736e" /><rect x="3.500" y="4.500" width="19" height="7" fill="#3a3936" /><path d="M4 6h18v3H4z" fill="#f28a3c" /><rect x="3" y="11" width="20" height="12" fill="#b9b5b0" /><rect x="9.500" y="15.500" width="7" height="4" fill="#eee" stroke="#777" /></Svg>,
  <Svg s={26}><path d="M6 0h20v20l-6 6H0V6z" fill="#14a8e4" /><path d="M20 7.500h-6.500c-8 0-8 11.500 0 11.500H20" stroke="#fff" strokeWidth="4.200" /></Svg>,
  <Svg s={26}><path d="M8 7V2h10v5" stroke="#c9441a" strokeWidth="2" /><path d="M1 5h24v20H1z" fill="url(#bag)" /><path d="M8.500 20L13 10l4.500 10M10 16.500h6" stroke="#fff" strokeWidth="2.200" /></Svg>,
  <Svg s={26}><path d="M13 0l12 12c2 2-4 3-3 5s2 1 0 2-3 0-4 2 0 3-3 4-3 0-5-1 0-3-3-3 1-2-3-4-4-3-2-5z" fill="url(#ink)" /><path d="M13 1l6 6-3 1-2 2-2-2-4 2-2-2z" fill="#eee" /><path d="M4 20l3-1 1 2zM20 21l3 0-2 2z" fill="#000" /></Svg>,
  <Svg s={26}><rect x="1.500" y="4.500" width="23" height="17" rx="1.500" fill="#dcdcd8" stroke="#8d8d88" /><rect x="3" y="6" width="6" height="3" fill="#555" /><circle cx="15.500" cy="14" r="6.500" fill="#c8c8c4" stroke="#777" /><circle cx="15.500" cy="14" r="4" fill="#222" /><circle cx="15.500" cy="14" r="1.800" fill="#568" /></Svg>,
];

function Taskbar() {
  return (
    <div className="relative flex h-[43px] items-center bg-[linear-gradient(90deg,#34472f_0%,#37492f_22%,#40512b_40%,#48533a_47%,#4a543b_54%,#41522c_63%,#41512b_67%,#344b2d_77%,#33462e_100%)]">
      <div className="absolute left-[967px] top-0"><svg width="50" height="41" fill="none" className="block"><path d="M2 0c1 22 12 38 23 38S47 22 48 0h-6c-2 14-9 26-17 26S10 14 8 0z" fill="#5d5f52" opacity=".7" /><path d="M8 0c2 14 9 20 17 20S40 14 42 0z" fill="#49593a" /><path d="M3 11l8-4M47 11l-8-4M10 26l7-7M40 26l-7-7M6 16c6 20 32 20 38 0" stroke="#444d38" /></svg></div>
      {apps.map((a, i) => (
        <div key={i} className="flex w-[44px] shrink-0 justify-center">
          <div className={"flex h-[40px] w-[40px] flex-col items-center justify-end pb-[6px] " + (i === 6 ? "rounded-[3px] bg-white/20" : "")}>
            {a}
            {(i === 1 || i === 5 || i === 6) && <div className="-mb-[5px] mt-[2px] size-[4px] rounded-full bg-[#e95420]" />}
          </div>
        </div>
      ))}
      <div className="ml-auto mr-[13px] grid grid-cols-3 gap-[3px]">
        {Array.from({ length: 9 }, (_, i) => <span key={i} className="size-[4px] rounded-full bg-[#f3f3f3]" />)}
      </div>
    </div>
  );
}

export default function App() {
  return (
    <div className="relative flex h-[1080px] w-[1920px] flex-col overflow-hidden bg-[#f2f1f0] font-['Noto_Sans','Open_Sans',sans-serif] text-[14px] leading-[20px] text-[#4c4c4c]">
      <Defs />
      <Header />
      <ControlBar />
      <div className="flex h-[862px]">
        <div className="w-[40px]"><IconColumn groups={toolGroups} icons={tools} tools /></div>
        <div className="flex w-[1050px] flex-col">
          <div className="h-[843px] bg-white"><Drawing /></div>
          <div className="mt-[10px] h-[5px] bg-[#f2906a]" />
        </div>
        <div className="flex w-[30px] flex-col">
          <div className={"ml-[1px] mt-px flex h-[16px] w-[16px] items-center justify-center " + RAISED}><svg width="6" height="9" fill="none"><path d="M1 5V2.500a2 2 0 014 0V8H3V4" stroke="#888" /></svg></div>
          <div className="ml-[10px] mt-[85px] h-[741px] w-[5px] bg-[#f2906a]" />
          <div className={"ml-[1px] mt-px flex h-[16px] w-[16px] items-center justify-center " + RAISED}>
            <div className="size-[15px] shrink-0 bg-[conic-gradient(from_60deg,#f00,#f0a_8%,#00f_38%,#0cf_60%,#0f0_78%,#ff0_92%,#f00)] [clip-path:polygon(5%_0,100%_65%,30%_100%)]" />
          </div>
        </div>
        <Dock />
        <div className="ml-[16px] w-[38px]">
          <IconColumn groups={commandGroups} icons={commands} />
          <svg width="6" height="10" className="ml-[17px] mt-[36px]"><path d="M0 0v10l6-5z" fill="#444" /></svg>
        </div>
        <div className="w-[30px]">
          {snapGroups.map((g, gi) => (
            <div key={gi}>
              {gi > 0 && <Rule cls="w-[30px]" />}
              {g.map((k) => (
                <div key={k} className="flex h-[28px] items-center justify-center">
                  <div className={"flex h-[26px] w-[28px] items-center justify-center " + (k[0] === "*" ? PRESSED : "")}><Svg s={16}>{snaps[k.replace("*", "")]}</Svg></div>
                </div>
              ))}
            </div>
          ))}
        </div>
      </div>
      <Palette />
      <StatusBar />
      <Taskbar />
      <EditMenu />
    </div>
  );
}
